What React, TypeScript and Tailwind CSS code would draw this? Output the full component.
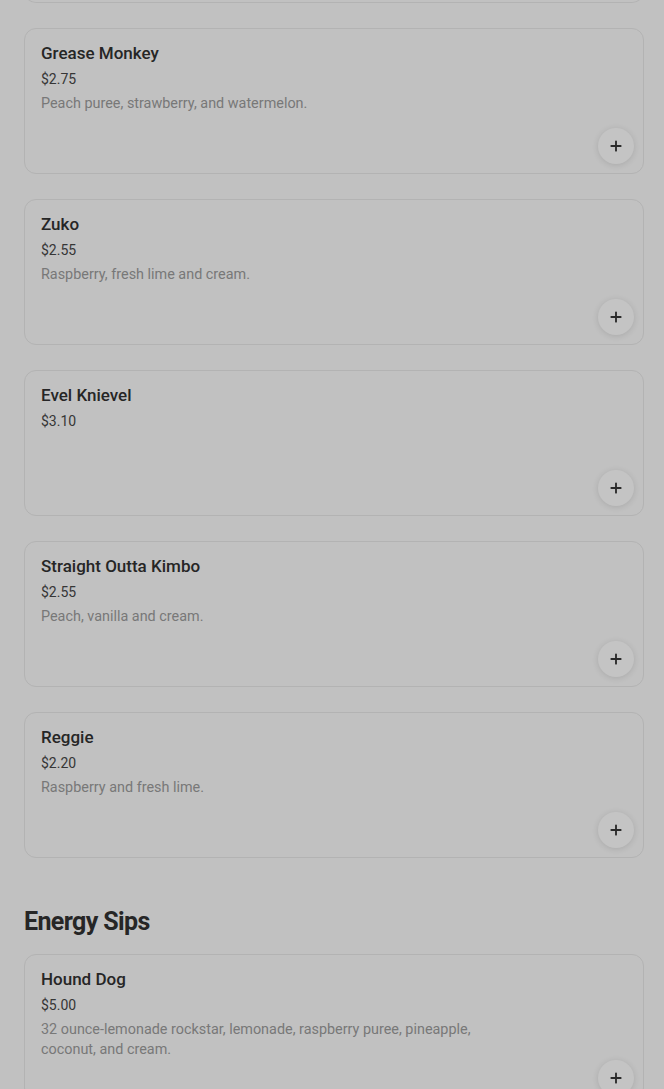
import { Plus } from "lucide-react";

type Item = {
  name: string;
  price: string;
  desc?: string;
};

const smoothies: Item[] = [
  { name: "Grease Monkey", price: "$2.75", desc: "Peach puree, strawberry, and watermelon." },
  { name: "Zuko", price: "$2.55", desc: "Raspberry, fresh lime and cream." },
  { name: "Evel Knievel", price: "$3.10" },
  { name: "Straight Outta Kimbo", price: "$2.55", desc: "Peach, vanilla and cream." },
  { name: "Reggie", price: "$2.20", desc: "Raspberry and fresh lime." },
];

const energy: Item[] = [
  {
    name: "Hound Dog",
    price: "$5.00",
    desc: "32 ounce-lemonade rockstar, lemonade, raspberry puree, pineapple, coconut, and cream.",
  },
];

function MenuCard({ item }: { item: Item }) {
  return (
    <div className="flex h-[146px] flex-col rounded-xl border border-[#b3b3b3] pl-4 pr-[9px] pt-[13px] pb-[9px]">
      <h3 className="text-[17px] leading-[22px] font-medium text-[#262626]">{item.name}</h3>
      <p className="mt-[5px] text-[14px] leading-5 text-[#363636]">{item.price}</p>
      {item.desc && (
        <p className="mt-[5px] w-[450px] text-[14.4px] leading-5 text-[#787878]">{item.desc}</p>
      )}
      <button className="mt-auto flex h-9 w-9 shrink-0 items-center justify-center self-end rounded-full bg-[#c4c4c4] shadow-[0_1px_6px_rgba(0,0,0,0.12)]">
        <Plus size={16} strokeWidth={2.8} className="text-[#2a2a2a]" />
      </button>
    </div>
  );
}

export default function App() {
  return (
    <div
      className="h-[1089px] w-full overflow-hidden bg-[#c1c1c1] pl-6 pr-5"
      style={{ fontFamily: "Roboto, 'Noto Sans', sans-serif" }}
    >
      {/* bottom edge of the previous card, scrolled off */}
      <div className="-mt-[10px] h-[13px] rounded-b-xl border border-t-0 border-[#b3b3b3]" />
      <div className="mt-[25px] flex flex-col gap-[25px]">
        {smoothies.map((item) => (
          <MenuCard key={item.name} item={item} />
        ))}
      </div>
      <h2 className="mt-[46px] mb-[14px] text-[25px] leading-9 font-bold tracking-tight text-[#262626]">
        Energy Sips
      </h2>
      <div className="flex flex-col gap-[25px]">
        {energy.map((item) => (
          <MenuCard key={item.name} item={item} />
        ))}
      </div>
    </div>
  );
}
